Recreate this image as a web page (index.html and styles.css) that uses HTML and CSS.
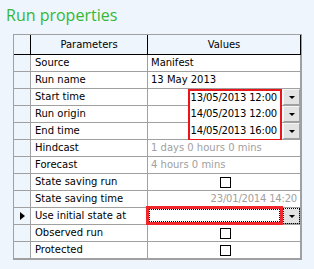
FILE: index.html
```html
<!DOCTYPE html>
<html lang="en">
<head>
  <meta charset="UTF-8">
  <title>Run properties</title>
  <link rel="stylesheet" href="styles.css">
</head>
<body>
  <h1 class="title">Run properties</h1>

  <div class="grid">
    <!-- header -->
    <div class="rh head"></div>
    <div class="cell head">Parameters</div>
    <div class="cell head">Values</div>

    <div class="rh"></div>
    <div class="cell name">Source</div>
    <div class="cell val">Manifest</div>

    <div class="rh"></div>
    <div class="cell name">Run name</div>
    <div class="cell val">13 May 2013</div>

    <div class="rh"></div>
    <div class="cell name">Start time</div>
    <div class="cell val combo">
      <span class="edit first">13/05/2013 12:00</span>
      <span class="drop"></span>
    </div>

    <div class="rh"></div>
    <div class="cell name">Run origin</div>
    <div class="cell val combo">
      <span class="edit middle">14/05/2013 12:00</span>
      <span class="drop"></span>
    </div>

    <div class="rh"></div>
    <div class="cell name">End time</div>
    <div class="cell val combo">
      <span class="edit last">14/05/2013 16:00</span>
      <span class="drop"></span>
    </div>

    <div class="rh"></div>
    <div class="cell name">Hindcast</div>
    <div class="cell val muted">1 days 0 hours 0 mins</div>

    <div class="rh"></div>
    <div class="cell name">Forecast</div>
    <div class="cell val muted">4 hours 0 mins</div>

    <div class="rh"></div>
    <div class="cell name">State saving run</div>
    <div class="cell val check"><span class="box"></span></div>

    <div class="rh"></div>
    <div class="cell name">State saving time</div>
    <div class="cell val muted right date">23/01/2014 14:20</div>

    <div class="rh current"><span class="arrow"></span></div>
    <div class="cell name">Use initial state at</div>
    <div class="cell val combo wide">
      <span class="edit focus"></span>
      <span class="drop dotted"></span>
    </div>

    <div class="rh"></div>
    <div class="cell name">Observed run</div>
    <div class="cell val check"><span class="box"></span></div>

    <div class="rh"></div>
    <div class="cell name">Protected</div>
    <div class="cell val check"><span class="box"></span></div>
  </div>
</body>
</html>
```

FILE: styles.css
```css
body {
  margin: 0;
  background-color: #eef5fd;
  font-family: "DejaVu Sans", sans-serif;
  font-size: 10px;
  color: #000;
}

.title {
  margin: 0;
  padding: 4px 0 0 6px;
  height: 30px;
  box-sizing: border-box;
  font-family: "Open Sans", sans-serif;
  font-weight: normal;
  font-size: 16px;
  line-height: 22px;
  color: #35b834;
}

.grid {
  display: grid;
  grid-template-columns: 17px 117px 153px;
  grid-template-rows: 20px;
  grid-auto-rows: 17px;
  width: max-content;
  margin: 4px 0 0 13px;
  border: 1px solid #a0a0a0;
}

.grid > div {
  box-sizing: border-box;
  border-right: 1px solid #a0a0a0;
  border-bottom: 1px solid #a0a0a0;
}

.rh {
  background-color: #eef5fd;
}

.grid > .head {
  border-right-color: #000;
  border-bottom-color: #000;
  background-color: #eef5fd;
  text-align: center;
  line-height: 19px;
}

.cell {
  background-color: #fff;
  line-height: 16px;
  white-space: nowrap;
  overflow: hidden;
}

.name {
  padding-left: 4px;
}

.val {
  padding-left: 3px;
}

.muted {
  color: #a0a0a0;
}

.right {
  text-align: right;
  padding-right: 3px;
}

.date {
  letter-spacing: -0.2px;
}

.combo {
  display: flex;
  justify-content: flex-end;
  padding-left: 0;
  overflow: visible;
}

.edit {
  width: 94px;
  margin-right: 1px;
  box-sizing: border-box;
  background-color: #fff;
  border-left: 2px solid #e8161b;
  border-right: 2px solid #e8161b;
  text-align: right;
  padding-right: 3px;
  letter-spacing: -0.2px;
}

.edit.first {
  border-top: 2px solid #e8161b;
  margin-bottom: -1px;
  line-height: 14px;
}

.edit.middle {
  margin-bottom: -1px;
}

.edit.last {
  border-bottom: 2px solid #e8161b;
  margin-bottom: -2px;
  line-height: 16px;
}

.wide .edit {
  width: 137px;
  margin: -2px 0 -1px -2px;
}

.focus {
  border: 3px solid #f0262b;
  outline: 1px dotted #000;
  outline-offset: -4px;
}

.drop {
  width: 17px;
  box-sizing: border-box;
  background-color: #e3e3e3;
  border: 1px solid #f5f5f5;
  border-right-color: #a0a0a0;
  border-bottom-color: #a0a0a0;
  display: flex;
  align-items: center;
  justify-content: center;
}

.drop::after {
  content: "";
  border-left: 3px solid transparent;
  border-right: 3px solid transparent;
  border-top: 3px solid #000;
}

.dotted {
  outline: 1px dotted #000;
  outline-offset: -1px;
}

.check {
  display: flex;
  align-items: center;
  justify-content: center;
  padding-left: 2px;
}

.box {
  width: 11px;
  height: 11px;
  box-sizing: border-box;
  border: 1px solid #000;
  background-color: #fff;
}

.current {
  display: flex;
  align-items: center;
  justify-content: center;
}

.arrow {
  border-top: 4px solid transparent;
  border-bottom: 4px solid transparent;
  border-left: 5px solid #000;
}
```
